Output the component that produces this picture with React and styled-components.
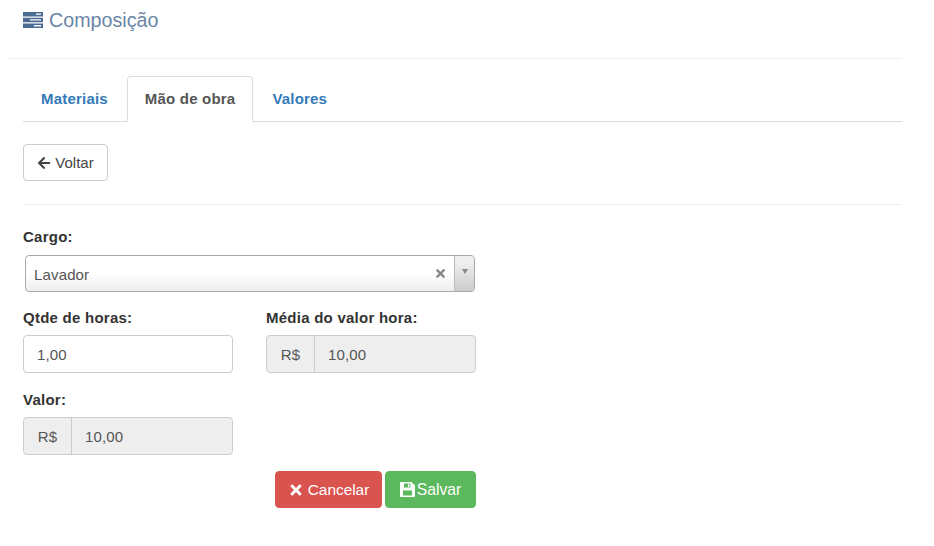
import React from "react";
import styled, { createGlobalStyle } from "styled-components";
import { FaArrowLeft, FaTimes } from "react-icons/fa";

const GlobalStyle = createGlobalStyle`
  html, body {
    margin: 0;
    padding: 0;
    background: #fff;
  }
  body {
    font-family: "Liberation Sans", Arial, sans-serif;
    font-size: 15px;
    letter-spacing: 0.15px;
    color: #333;
  }
  * {
    box-sizing: border-box;
  }
`;

const Page = styled.div`
  width: 934px;
  height: 546px;
  padding: 0 32px 0 8px;
  overflow: hidden;
`;

const TitleBar = styled.div`
  height: 59px;
  padding: 9px 0 0 15px;
  border-bottom: 1px solid #eee;
`;

const Title = styled.h3`
  margin: 0;
  display: flex;
  align-items: center;
  gap: 6px;
  font-size: 19.7px;
  line-height: 22px;
  font-weight: 400;
  letter-spacing: 0;
  color: #6a86a7;
`;

const TitleIcon = styled.svg`
  width: 20px;
  height: 16px;
  color: #4c6d93;
`;

const Body = styled.div`
  padding: 17px 0 0 15px;
`;

const Tabs = styled.div`
  display: flex;
  height: 46px;
  border-bottom: 1px solid #ddd;
`;

const Tab = styled.div`
  height: 46px;
  padding: 0 ${(p) => p.$pad}px 2px;
  margin-left: ${(p) => p.$left || 0}px;
  display: flex;
  align-items: center;
  font-size: 15px;
  letter-spacing: 0.2px;
  font-weight: 700;
  border: 1px solid ${(p) => (p.$active ? "#ddd" : "transparent")};
  border-bottom-color: ${(p) => (p.$active ? "#fff" : "transparent")};
  border-radius: 4px 4px 0 0;
  background: ${(p) => (p.$active ? "#fff" : "transparent")};
  color: ${(p) => (p.$active ? "#555" : "#337ab7")};
`;

const BackRow = styled.div`
  padding: 22px 0 23px;
  border-bottom: 1px solid #eee;
`;

const Button = styled.button`
  height: 37px;
  width: ${(p) => p.$width}px;
  padding: 0;
  display: inline-flex;
  align-items: center;
  justify-content: center;
  gap: ${(p) => p.$gap}px;
  font: ${(p) => p.$size}px "Liberation Sans", Arial, sans-serif;
  border-radius: 4px;
  border: 1px solid ${(p) => p.$border};
  background: ${(p) => p.$bg};
  color: ${(p) => p.$color};
`;

const Form = styled.div`
  width: 453px;
  padding-top: 23px;
`;

const Label = styled.label`
  display: block;
  height: 18px;
  line-height: 18px;
  font-size: 15px;
  letter-spacing: 0.25px;
  font-weight: 700;
  color: #333;
  margin-bottom: 8px;
`;

const SelectBox = styled.div`
  height: 37px;
  margin: 9px 1px 0 2px;
  display: flex;
  align-items: center;
  border: 1px solid #aaa;
  border-radius: 4px;
  background: linear-gradient(to bottom, #fff 0%, #fff 50%, #eee 100%);
  color: #555;
`;

const SelectValue = styled.span`
  flex: 1;
  padding: 1px 0 0 8px;
`;

const Clear = styled.span`
  width: 28px;
  display: flex;
  justify-content: center;
  color: #888;
  font-size: 13px;
`;

const Arrow = styled.span`
  width: 20px;
  height: 100%;
  display: flex;
  justify-content: center;
  padding-top: 13px;
  border-left: 1px solid #bbb;
  border-radius: 0 4px 4px 0;
  background: linear-gradient(to bottom, #eee 20%, #ccc 100%);

  &::after {
    content: "";
    width: 0;
    height: 0;
    border-left: 3px solid transparent;
    border-right: 3px solid transparent;
    border-top: 5px solid #888;
  }
`;

const FieldRow = styled.div`
  display: flex;
  gap: 33px;
  margin-top: ${(p) => p.$top}px;
`;

const Field = styled.div`
  width: 210px;
`;

const InputGroup = styled.div`
  display: flex;
  height: 38px;
  border: 1px solid #ccc;
  border-radius: 4px;
  color: #555;
  background: ${(p) => (p.$disabled ? "#eee" : "#fff")};
`;

const Addon = styled.span`
  width: 48px;
  display: flex;
  align-items: center;
  justify-content: center;
  border-right: 1px solid #ccc;
`;

const Value = styled.span`
  display: flex;
  align-items: center;
  padding-left: 13px;
`;

const Actions = styled.div`
  display: flex;
  justify-content: flex-end;
  gap: 3px;
  margin-top: 16px;
`;

const SaveIcon = () => (
  <svg width="15" height="15" viewBox="0 0 15 15">
    <path
      fillRule="evenodd"
      fill="currentColor"
      d="M1 0h10.5L15 3.5V14a1 1 0 0 1-1 1H1a1 1 0 0 1-1-1V1a1 1 0 0 1 1-1zM4 1.6v4h6.5v-4zM8 2.2h1.5v2.8H8zM3 8.5v5h9v-5z"
    />
  </svg>
);

export default function App() {
  return (
    <Page>
      <GlobalStyle />
      <TitleBar>
        <Title>
          <TitleIcon viewBox="0 0 20 16">
            <path
              fillRule="evenodd"
              fill="currentColor"
              d="M0 0h20v4.4H0zM13 1.4v1.4h5V1.4zM0 5.8h20v4.4H0zM7 7.2v1.4h11V7.2zM0 11.6h20V16H0zM11 13v1.4h7V13z"
            />
          </TitleIcon>
          Composição
        </Title>
      </TitleBar>
      <Body>
        <Tabs>
          <Tab $pad={17}>Materiais</Tab>
          <Tab $pad={17} $active $left={1}>Mão de obra</Tab>
          <Tab $pad={18}>Valores</Tab>
        </Tabs>
        <BackRow>
          <Button $width={85} $size={15} $gap={4} $bg="#fff" $border="#ccc" $color="#444">
            <FaArrowLeft size={14} />
            Voltar
          </Button>
        </BackRow>
        <Form>
          <Label>Cargo:</Label>
          <SelectBox>
            <SelectValue>Lavador</SelectValue>
            <Clear>
              <FaTimes />
            </Clear>
            <Arrow />
          </SelectBox>
          <FieldRow $top={17}>
            <Field>
              <Label>Qtde de horas:</Label>
              <InputGroup>
                <Value>1,00</Value>
              </InputGroup>
            </Field>
            <Field>
              <Label>Média do valor hora:</Label>
              <InputGroup $disabled>
                <Addon>R$</Addon>
                <Value>10,00</Value>
              </InputGroup>
            </Field>
          </FieldRow>
          <FieldRow $top={18}>
            <Field>
              <Label>Valor:</Label>
              <InputGroup $disabled>
                <Addon>R$</Addon>
                <Value>10,00</Value>
              </InputGroup>
            </Field>
          </FieldRow>
          <Actions>
            <Button $width={107} $size={15.4} $gap={4} $bg="#d9534f" $border="#d9534f" $color="#fff">
              <FaTimes size={16} />
              Cancelar
            </Button>
            <Button $width={91} $size={15.7} $gap={2} $bg="#5cb85c" $border="#5cb85c" $color="#fff">
              <SaveIcon />
              Salvar
            </Button>
          </Actions>
        </Form>
      </Body>
    </Page>
  );
}
